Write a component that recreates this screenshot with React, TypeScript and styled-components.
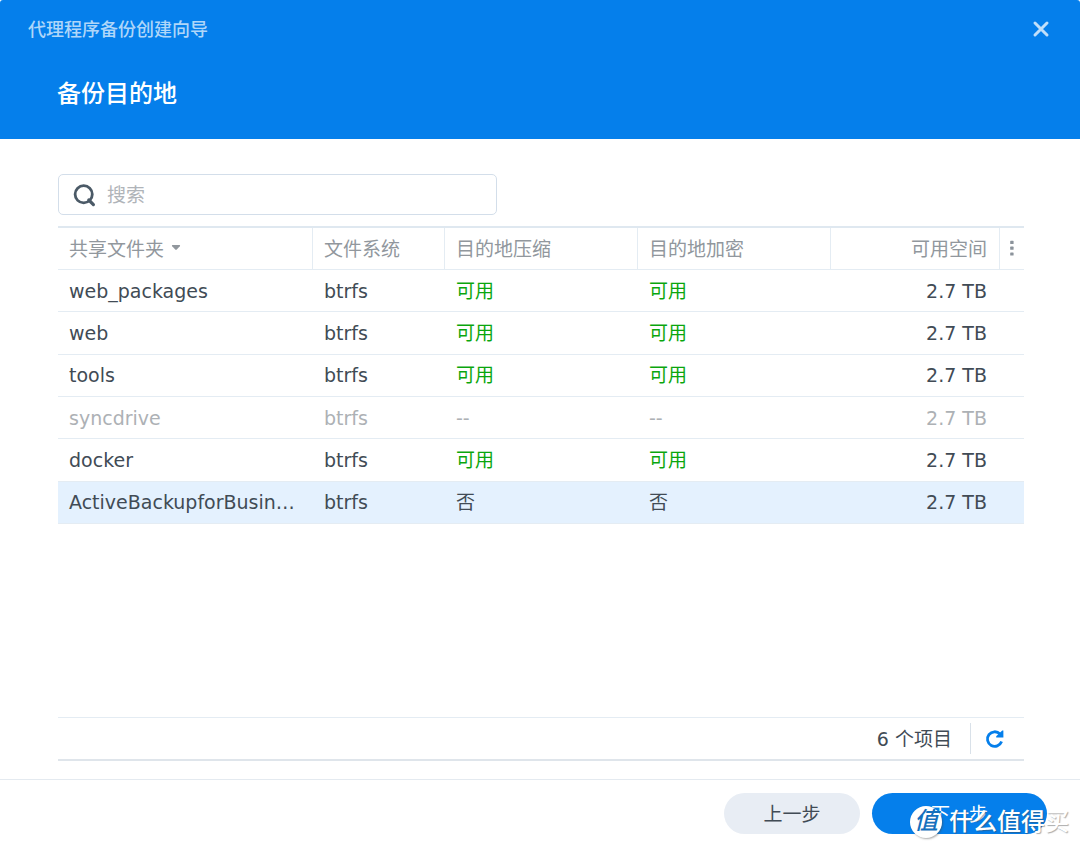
import React from "react";
import styled, { createGlobalStyle } from "styled-components";

const GlobalStyle = createGlobalStyle`
  * {
    box-sizing: border-box;
  }
  body {
    margin: 0;
    background: #ffffff;
    color: #414b55;
    font-family: "DejaVu Sans", "Noto Sans CJK SC", sans-serif;
    font-size: 19px;
    line-height: 24px;
  }
  button,
  input {
    font: inherit;
  }
`;

const Wizard = styled.main`
  position: relative;
  display: flex;
  flex-direction: column;
  min-height: 100vh;
`;

const Header = styled.header`
  display: flex;
  flex-direction: column;
  gap: 34px;
  height: 139px;
  padding: 16px 28px 0;
  border-radius: 3px 3px 0 0;
  background: #057feb;
`;

const TitleBar = styled.div`
  display: flex;
  align-items: flex-start;
  justify-content: space-between;
  margin-right: -1px;
`;

const WizardTitle = styled.p`
  margin: 0;
  color: #afd6f9;
  font-size: 18px;
  font-weight: 500;
  line-height: 28px;
`;

const CloseButton = styled.button`
  display: flex;
  padding: 3px 2px;
  border: 0;
  background: none;
  color: #c0dffa;
  cursor: pointer;
`;

const StepTitle = styled.h1`
  margin: 0;
  padding-left: 29px;
  color: #ffffff;
  font-size: 24px;
  font-weight: 500;
  line-height: 32px;
`;

const Content = styled.section`
  display: flex;
  flex: 1;
  flex-direction: column;
  padding: 35px 56px 18px 58px;
`;

const SearchBox = styled.label`
  display: flex;
  align-items: center;
  gap: 10px;
  width: 439px;
  max-width: 100%;
  height: 41px;
  margin-bottom: 11px;
  padding: 0 14px;
  border: 1px solid #d3deea;
  border-radius: 5px;
  color: #4b5a67;
`;

const SearchInput = styled.input`
  flex: 1;
  min-width: 0;
  padding: 0;
  border: 0;
  outline: 0;
  background: none;
  color: #414b55;

  &::placeholder {
    color: #b0b4b9;
    opacity: 1;
  }
`;

const FolderTable = styled.table`
  width: 100%;
  height: 298px;
  border-top: 2px solid #dfe8f0;
  border-spacing: 0;
  table-layout: fixed;
`;

const Column = styled.col<{ $width: number }>`
  width: ${({ $width }) => $width}px;
`;

type Align = "left" | "right";

const HeadCell = styled.th<{ $align?: Align; $last?: boolean }>`
  height: 42px;
  padding: ${({ $last }) => ($last ? "0" : "0 12px 0 11px")};
  border-right: ${({ $last }) => ($last ? "0" : "1px solid #e4ecf3")};
  border-bottom: 1px solid #e4ecf3;
  color: #91979d;
  font-weight: 400;
  text-align: ${({ $align = "left" }) => $align};
  white-space: nowrap;
`;

const SortButton = styled.button`
  display: flex;
  align-items: center;
  gap: 7px;
  padding: 0;
  border: 0;
  background: none;
  color: inherit;
  cursor: pointer;
`;

const MenuButton = styled.button`
  display: flex;
  justify-content: center;
  width: 100%;
  padding: 0;
  border: 0;
  background: none;
  color: #8b939b;
  cursor: pointer;
`;

const Row = styled.tr<{ $disabled?: boolean; $selected?: boolean }>`
  background: ${({ $selected }) => ($selected ? "#e4f1fe" : "transparent")};
  color: ${({ $disabled }) => ($disabled ? "#adb1b5" : "inherit")};
`;

const Cell = styled.td<{ $align?: Align; $available?: boolean }>`
  height: 42px;
  padding: 0 13px 0 11px;
  overflow: hidden;
  border-bottom: 1px solid #e4ecf3;
  color: ${({ $available }) => ($available ? "#0aa60d" : "inherit")};
  text-align: ${({ $align = "left" }) => $align};
  text-overflow: ellipsis;
  white-space: nowrap;
`;

const StatusBar = styled.div`
  display: flex;
  align-items: center;
  justify-content: flex-end;
  height: 44px;
  margin-top: auto;
  border-top: 1px solid #e4ecf3;
  border-bottom: 2px solid #dfe5eb;
`;

const ItemCount = styled.span`
  padding-right: 18px;
`;

const RefreshButton = styled.button`
  display: flex;
  align-items: center;
  height: 31px;
  padding: 0 19px 0 14px;
  border: 0;
  border-left: 1px solid #d9e1e9;
  background: none;
  color: #057feb;
  cursor: pointer;
`;

const Footer = styled.footer`
  display: flex;
  justify-content: flex-end;
  gap: 12px;
  padding: 13px 33px 15px;
  border-top: 1px solid #e4eaf0;
`;

const StepButton = styled.button<{ $primary?: boolean }>`
  height: 41px;
  min-width: ${({ $primary }) => ($primary ? 175 : 136)}px;
  padding: 0 24px;
  border: 0;
  border-radius: 21px;
  background: ${({ $primary }) => ($primary ? "#057feb" : "#e8edf4")};
  color: ${({ $primary }) => ($primary ? "#ffffff" : "#414b55")};
  cursor: pointer;
`;

const Watermark = styled.div`
  position: absolute;
  right: 11px;
  bottom: 10px;
  display: flex;
  align-items: center;
  gap: 7px;
  color: #ffffff;
  font-size: 24px;
  font-weight: 500;
  line-height: 34px;
  pointer-events: none;
  text-shadow: 1px 1px 1px rgba(70, 70, 70, 0.45);
`;

const WatermarkBadge = styled.span`
  width: 32px;
  height: 32px;
  border-radius: 50%;
  background: #ffffff;
  box-shadow: 1px 1px 2px rgba(70, 70, 70, 0.45);
  color: #1470bd;
  font-style: italic;
  line-height: 30px;
  text-align: center;
  text-shadow: none;
`;

interface Folder {
  name: string;
  compression: string;
  encryption: string;
  disabled?: boolean;
  selected?: boolean;
}

const folders: Folder[] = [
  { name: "web_packages", compression: "可用", encryption: "可用" },
  { name: "web", compression: "可用", encryption: "可用" },
  { name: "tools", compression: "可用", encryption: "可用" },
  { name: "syncdrive", compression: "--", encryption: "--", disabled: true },
  { name: "docker", compression: "可用", encryption: "可用" },
  { name: "ActiveBackupforBusiness", compression: "否", encryption: "否", selected: true },
];

const columnWidths = [255, 132, 193, 193, 169, 24];

function CloseIcon() {
  return (
    <svg width="20" height="20" viewBox="0 0 20 20" fill="none" stroke="currentColor" strokeWidth="3" strokeLinecap="round" aria-hidden="true">
      <path d="M4 4L16 16M16 4L4 16" />
    </svg>
  );
}

function SearchIcon() {
  return (
    <svg width="24" height="24" viewBox="0 0 24 24" fill="none" stroke="currentColor" strokeWidth="2.8" aria-hidden="true">
      <circle cx="10.7" cy="11.3" r="8.6" />
      <path d="M15.8 17L20.4 21.6" strokeWidth="3.2" strokeLinecap="round" />
    </svg>
  );
}

function SortIcon() {
  return (
    <svg width="10" height="10" viewBox="0 0 10 10" aria-hidden="true">
      <path d="M1.4 1H8.6Q9.6 1.2 8.8 2.2L5.8 5.4Q5 6.1 4.2 5.4L1.2 2.2Q.4 1.2 1.4 1Z" fill="currentColor" />
    </svg>
  );
}

function MoreIcon() {
  return (
    <svg width="4" height="18" viewBox="0 0 4 18" fill="currentColor" aria-hidden="true">
      <rect x="0.2" y="0.8" width="3.4" height="3.2" rx="0.6" />
      <rect x="0.2" y="6.6" width="3.4" height="3.2" rx="0.6" />
      <rect x="0.2" y="12.4" width="3.4" height="3.2" rx="0.6" />
    </svg>
  );
}

function RefreshIcon() {
  return (
    <svg width="20" height="20" viewBox="0 0 20 20" aria-hidden="true">
      <path d="M16.6 12.6A7.3 7.3 0 1 1 15 5" fill="none" stroke="currentColor" strokeWidth="2.8" />
      <path d="M18.4 1.4V8.4H11.2V7.2L17.2 1.4Z" fill="currentColor" />
    </svg>
  );
}

export default function App() {
  return (
    <>
      <GlobalStyle />
      <Wizard>
        <Header>
          <TitleBar>
            <WizardTitle>代理程序备份创建向导</WizardTitle>
            <CloseButton type="button" aria-label="关闭">
              <CloseIcon />
            </CloseButton>
          </TitleBar>
          <StepTitle>备份目的地</StepTitle>
        </Header>

        <Content>
          <SearchBox>
            <SearchIcon />
            <SearchInput type="text" placeholder="搜索" aria-label="搜索" />
          </SearchBox>

          <FolderTable>
            <colgroup>
              {columnWidths.map((width, index) => (
                <Column key={index} $width={width} />
              ))}
            </colgroup>
            <thead>
              <tr>
                <HeadCell scope="col">
                  <SortButton type="button">
                    共享文件夹
                    <SortIcon />
                  </SortButton>
                </HeadCell>
                <HeadCell scope="col">文件系统</HeadCell>
                <HeadCell scope="col">目的地压缩</HeadCell>
                <HeadCell scope="col">目的地加密</HeadCell>
                <HeadCell scope="col" $align="right">可用空间</HeadCell>
                <HeadCell scope="col" $last>
                  <MenuButton type="button" aria-label="列">
                    <MoreIcon />
                  </MenuButton>
                </HeadCell>
              </tr>
            </thead>
            <tbody>
              {folders.map((folder) => (
                <Row key={folder.name} $disabled={folder.disabled} $selected={folder.selected}>
                  <Cell>{folder.name}</Cell>
                  <Cell>btrfs</Cell>
                  <Cell $available={folder.compression === "可用"}>{folder.compression}</Cell>
                  <Cell $available={folder.encryption === "可用"}>{folder.encryption}</Cell>
                  <Cell $align="right">2.7 TB</Cell>
                  <Cell />
                </Row>
              ))}
            </tbody>
          </FolderTable>

          <StatusBar>
            <ItemCount>6 个项目</ItemCount>
            <RefreshButton type="button" aria-label="刷新">
              <RefreshIcon />
            </RefreshButton>
          </StatusBar>
        </Content>

        <Footer>
          <StepButton type="button">上一步</StepButton>
          <StepButton type="button" $primary>下一步</StepButton>
        </Footer>

        <Watermark>
          <WatermarkBadge>值</WatermarkBadge>
          什么值得买
        </Watermark>
      </Wizard>
    </>
  );
}
